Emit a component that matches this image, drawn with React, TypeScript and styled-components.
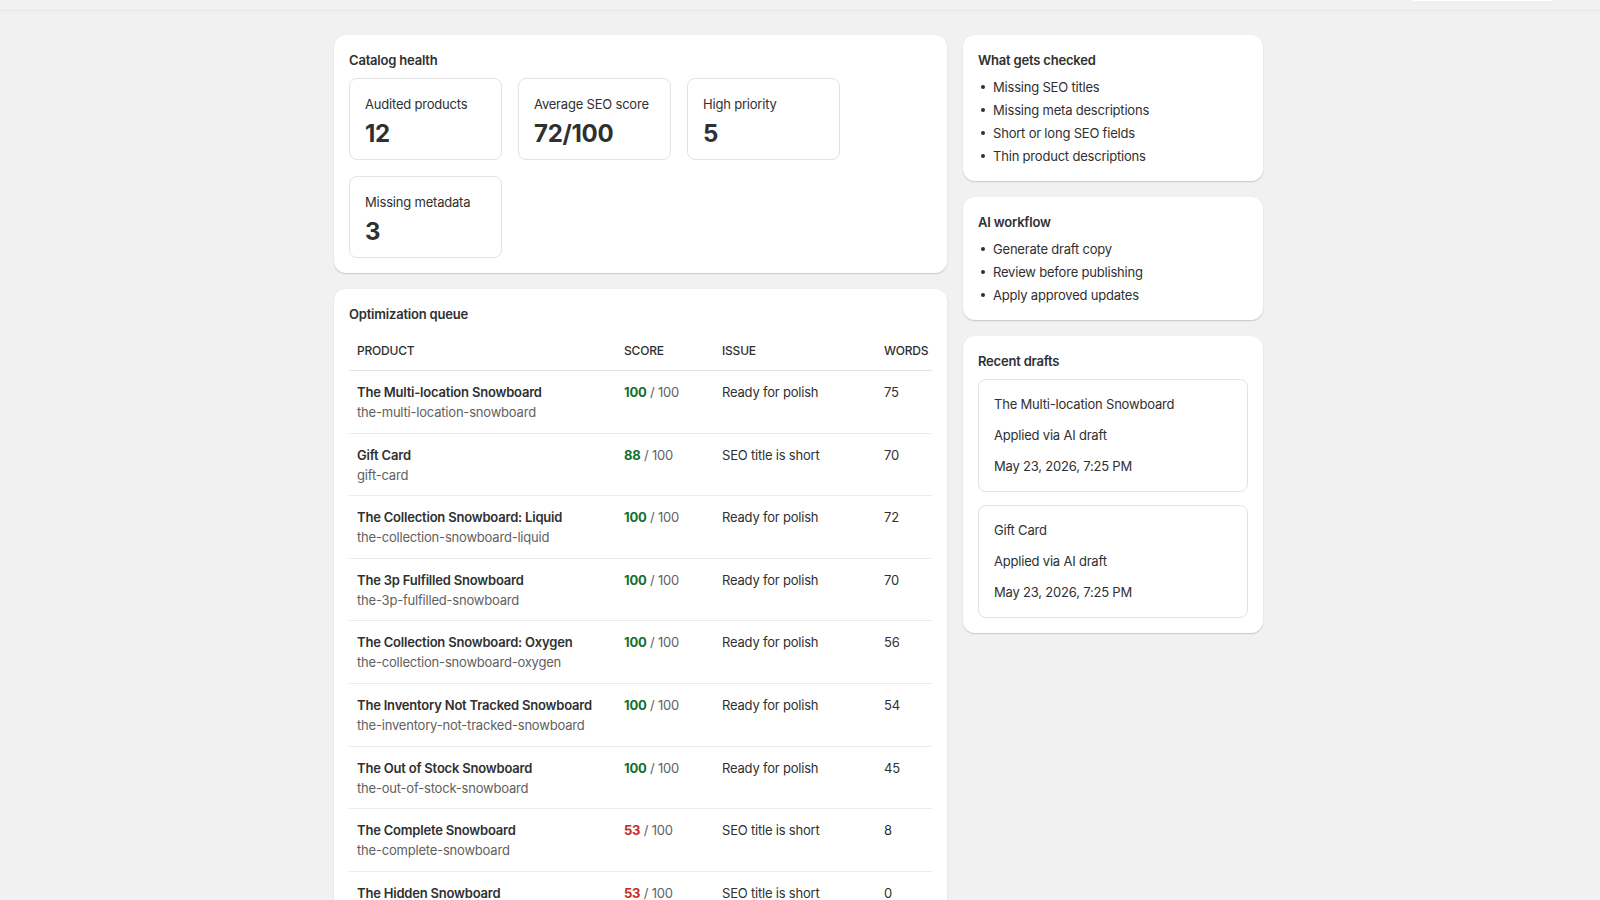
import { createGlobalStyle, styled } from 'styled-components';

const GlobalStyle = createGlobalStyle`
  html {
    scrollbar-width: none;
  }
  html::-webkit-scrollbar {
    display: none;
  }
  body {
    margin: 0;
    background: #f1f1f1;
    font-family: Inter, 'Noto Sans', sans-serif;
    font-size: 13px;
    line-height: 20px;
    letter-spacing: -0.2px;
    color: #303030;
    -webkit-font-smoothing: antialiased;
  }
`;

interface Stat {
  label: string;
  value: string;
}

interface Product {
  title: string;
  handle: string;
  score: number;
  issue: string;
  words: number;
}

interface Draft {
  title: string;
  note: string;
  date: string;
}

const stats: Stat[] = [
  { label: 'Audited products', value: '12' },
  { label: 'Average SEO score', value: '72/100' },
  { label: 'High priority', value: '5' },
  { label: 'Missing metadata', value: '3' },
];

const products: Product[] = [
  { title: 'The Multi-location Snowboard', handle: 'the-multi-location-snowboard', score: 100, issue: 'Ready for polish', words: 75 },
  { title: 'Gift Card', handle: 'gift-card', score: 88, issue: 'SEO title is short', words: 70 },
  { title: 'The Collection Snowboard: Liquid', handle: 'the-collection-snowboard-liquid', score: 100, issue: 'Ready for polish', words: 72 },
  { title: 'The 3p Fulfilled Snowboard', handle: 'the-3p-fulfilled-snowboard', score: 100, issue: 'Ready for polish', words: 70 },
  { title: 'The Collection Snowboard: Oxygen', handle: 'the-collection-snowboard-oxygen', score: 100, issue: 'Ready for polish', words: 56 },
  { title: 'The Inventory Not Tracked Snowboard', handle: 'the-inventory-not-tracked-snowboard', score: 100, issue: 'Ready for polish', words: 54 },
  { title: 'The Out of Stock Snowboard', handle: 'the-out-of-stock-snowboard', score: 100, issue: 'Ready for polish', words: 45 },
  { title: 'The Complete Snowboard', handle: 'the-complete-snowboard', score: 53, issue: 'SEO title is short', words: 8 },
  { title: 'The Hidden Snowboard', handle: 'the-hidden-snowboard', score: 53, issue: 'SEO title is short', words: 0 },
];

const checks = ['Missing SEO titles', 'Missing meta descriptions', 'Short or long SEO fields', 'Thin product descriptions'];
const workflow = ['Generate draft copy', 'Review before publishing', 'Apply approved updates'];

const drafts: Draft[] = [
  { title: 'The Multi-location Snowboard', note: 'Applied via AI draft', date: 'May 23, 2026, 7:25 PM' },
  { title: 'Gift Card', note: 'Applied via AI draft', date: 'May 23, 2026, 7:25 PM' },
];

export default function App() {
  return (
    <>
      <GlobalStyle />
      <TopStrip>
        <TopPill />
      </TopStrip>
      <Layout>
        <Column>
          <Card>
            <CardTitle>Catalog health</CardTitle>
            <StatGrid>
              {stats.map((s) => (
                <StatBox key={s.label}>
                  <StatLabel>{s.label}</StatLabel>
                  <StatValue>{s.value}</StatValue>
                </StatBox>
              ))}
            </StatGrid>
          </Card>
          <Card>
            <CardTitle>Optimization queue</CardTitle>
            <Table>
              <colgroup>
                <col style={{ width: 267 }} />
                <col style={{ width: 98 }} />
                <col style={{ width: 162 }} />
                <col />
              </colgroup>
              <thead>
                <tr>
                  <Th>Product</Th>
                  <Th>Score</Th>
                  <Th>Issue</Th>
                  <Th>Words</Th>
                </tr>
              </thead>
              <tbody>
                {products.map((p) => (
                  <Tr key={p.handle}>
                    <Td>
                      <ProductName>{p.title}</ProductName>
                      <Handle>{p.handle}</Handle>
                    </Td>
                    <Td>
                      <Score $low={p.score < 60}>{p.score}</Score>
                      <OutOf> / 100</OutOf>
                    </Td>
                    <Td>{p.issue}</Td>
                    <Td>{p.words}</Td>
                  </Tr>
                ))}
              </tbody>
            </Table>
          </Card>
        </Column>
        <Column>
          <Card>
            <CardTitle $tight>What gets checked</CardTitle>
            <BulletList>
              {checks.map((c) => (
                <Bullet key={c}>{c}</Bullet>
              ))}
            </BulletList>
          </Card>
          <Card>
            <CardTitle $tight>AI workflow</CardTitle>
            <BulletList>
              {workflow.map((c) => (
                <Bullet key={c}>{c}</Bullet>
              ))}
            </BulletList>
          </Card>
          <Card>
            <CardTitle>Recent drafts</CardTitle>
            <DraftList>
              {drafts.map((d) => (
                <DraftBox key={d.title}>
                  <DraftLine>{d.title}</DraftLine>
                  <DraftLine>{d.note}</DraftLine>
                  <DraftLine>{d.date}</DraftLine>
                </DraftBox>
              ))}
            </DraftList>
          </Card>
        </Column>
      </Layout>
    </>
  );
}

const TopStrip = styled.div`
  height: 10px;
  border-bottom: 1px solid #e6e6e6;
  display: flex;
  justify-content: flex-end;
  padding-right: 48px;
`;

const TopPill = styled.div`
  width: 139px;
  height: 1px;
  background: #ffffff;
`;

const Layout = styled.main`
  width: 929px;
  margin: 24px 0 0 calc(50% - 466px);
  display: grid;
  grid-template-columns: 613px 300px;
  gap: 16px;
  align-items: start;
`;

const Column = styled.div`
  display: flex;
  flex-direction: column;
  gap: 16px;
`;

const Card = styled.section`
  background: #ffffff;
  border-radius: 12px;
  padding: 15px 15px 15px;
  box-shadow: 0 1px 0 rgba(26, 26, 26, 0.07), 0 1px 2px rgba(0, 0, 0, 0.12);
`;

const CardTitle = styled.h2<{ $tight?: boolean }>`
  margin: 0 0 ${({ $tight }) => ($tight ? '7px' : '8px')};
  font-size: 13px;
  line-height: 20px;
  font-weight: 600;
  color: #303030;
`;

const StatGrid = styled.div`
  display: flex;
  flex-wrap: wrap;
  gap: 16px;
`;

const StatBox = styled.div`
  width: 153px;
  box-sizing: border-box;
  border: 1px solid #e3e3e3;
  border-radius: 8px;
  padding: 15px 15px 12px;
  display: flex;
  flex-direction: column;
  gap: 7px;
`;

const StatLabel = styled.span`
  font-size: 13px;
  line-height: 20px;
`;

const StatValue = styled.span`
  font-size: 24px;
  line-height: 26px;
  font-weight: 700;
  letter-spacing: -0.3px;
  color: #303030;
`;

const Table = styled.table`
  width: 100%;
  border-collapse: collapse;
  table-layout: fixed;
  margin-top: 2px;
`;

const Th = styled.th`
  text-align: left;
  font-size: 12px;
  line-height: 20px;
  font-weight: 450;
  text-transform: uppercase;
  color: #303030;
  padding: 9px 8px 9px;
  border-bottom: 1px solid #e3e3e3;
  white-space: nowrap;
`;

const Tr = styled.tr`
  border-bottom: 1px solid #ebebeb;
`;

const Td = styled.td`
  vertical-align: top;
  padding: 11px 8px 10.6px;
  font-size: 13px;
  line-height: 20px;
  color: #303030;
  white-space: nowrap;
`;

const ProductName = styled.div`
  font-weight: 600;
`;

const Handle = styled.div`
  color: #616161;
`;

const Score = styled.span<{ $low?: boolean }>`
  font-weight: 700;
  color: ${({ $low }) => ($low ? '#c42b1f' : '#12702c')};
`;

const OutOf = styled.span`
  color: #616161;
`;

const BulletList = styled.ul`
  list-style: none;
  margin: 0;
  padding: 0;
  display: flex;
  flex-direction: column;
  gap: 3px;
`;

const Bullet = styled.li`
  display: flex;
  align-items: center;
  gap: 8px;
  font-size: 13px;
  line-height: 20px;
  &::before {
    content: '';
    width: 4px;
    height: 4px;
    margin-left: 3px;
    border-radius: 50%;
    background: #303030;
    flex-shrink: 0;
  }
`;

const DraftList = styled.div`
  display: flex;
  flex-direction: column;
  gap: 13px;
`;

const DraftBox = styled.div`
  border: 1px solid #e3e3e3;
  border-radius: 8px;
  padding: 14px 15px 15.5px;
  display: flex;
  flex-direction: column;
  gap: 10.8px;
`;

const DraftLine = styled.p`
  margin: 0;
  font-size: 13px;
  line-height: 20px;
`;
